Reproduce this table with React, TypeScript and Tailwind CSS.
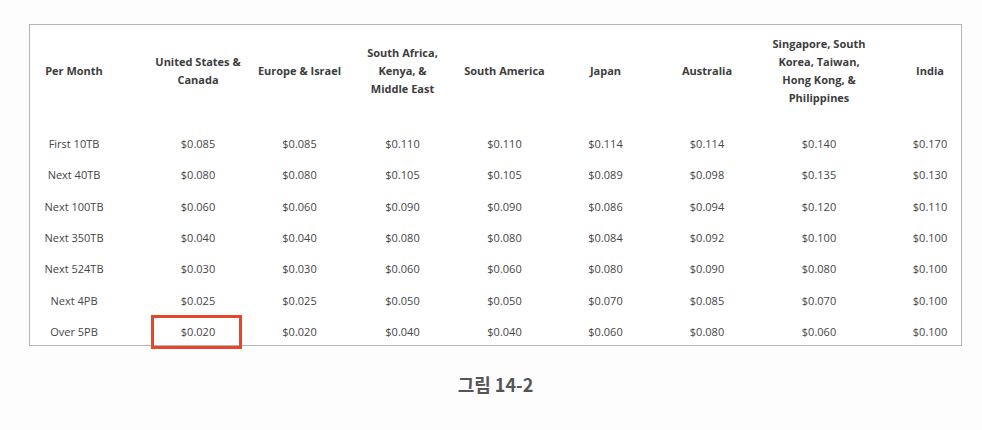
const headers: string[][] = [
  ["Per Month"],
  ["United States &", "Canada"],
  ["Europe & Israel"],
  ["South Africa,", "Kenya, &", "Middle East"],
  ["South America"],
  ["Japan"],
  ["Australia"],
  ["Singapore, South", "Korea, Taiwan,", "Hong Kong, &", "Philippines"],
  ["India"],
];

const rows: string[][] = [
  ["First 10TB", "$0.085", "$0.085", "$0.110", "$0.110", "$0.114", "$0.114", "$0.140", "$0.170"],
  ["Next 40TB", "$0.080", "$0.080", "$0.105", "$0.105", "$0.089", "$0.098", "$0.135", "$0.130"],
  ["Next 100TB", "$0.060", "$0.060", "$0.090", "$0.090", "$0.086", "$0.094", "$0.120", "$0.110"],
  ["Next 350TB", "$0.040", "$0.040", "$0.080", "$0.080", "$0.084", "$0.092", "$0.100", "$0.100"],
  ["Next 524TB", "$0.030", "$0.030", "$0.060", "$0.060", "$0.080", "$0.090", "$0.080", "$0.100"],
  ["Next 4PB", "$0.025", "$0.025", "$0.050", "$0.050", "$0.070", "$0.085", "$0.070", "$0.100"],
  ["Over 5PB", "$0.020", "$0.020", "$0.040", "$0.040", "$0.060", "$0.080", "$0.060", "$0.100"],
];

// per-column nudges so the centred text lands where the scan has it
const colPad = ["pr-[18px]", "pl-[12px]", "", "", "", "", "pr-[5px]", "", "pl-[24px]"];

export default function App() {
  return (
    <div className="w-[982px] h-[430px] bg-[#fdfdfd] pt-[24px] font-['Open_Sans',sans-serif]">
      <div className="ml-[29px] w-[933px] border border-[#b4b4b4] bg-white">
        <div className="grid grid-cols-[106px_112px_103px_103px_101px_101px_107px_112px_86px]">
          {headers.map((lines, i) => (
            <div
              key={i}
              className={`h-[103.6px] pb-[12px] flex flex-col items-center justify-center text-center text-[11px] leading-[18px] font-bold text-[#3d3d3d] ${colPad[i]}`}
            >
              {lines.map((l) => (
                <span key={l}>{l}</span>
              ))}
            </div>
          ))}
          {rows.map((row, r) =>
            row.map((cell, c) => (
              <div
                key={`${r}-${c}`}
                className={`relative flex items-center justify-center text-[11px] text-[#464646] ${
                  r === rows.length - 1 ? "h-[28px] pt-[3px]" : "h-[31.33px]"
                } ${colPad[c]}`}
              >
                {cell}
                {r === rows.length - 1 && c === 1 && (
                  <div className="absolute left-[15px] top-[-2px] w-[91px] h-[34px] border-[3px] border-[#e4472b]" />
                )}
              </div>
            ))
          )}
        </div>
      </div>
      <div className="ml-[29px] w-[933px] mt-[25px] text-center text-[18px] font-bold text-[#555] font-['Noto_Sans_CJK_KR',sans-serif]">
        그림 14-2
      </div>
    </div>
  );
}
